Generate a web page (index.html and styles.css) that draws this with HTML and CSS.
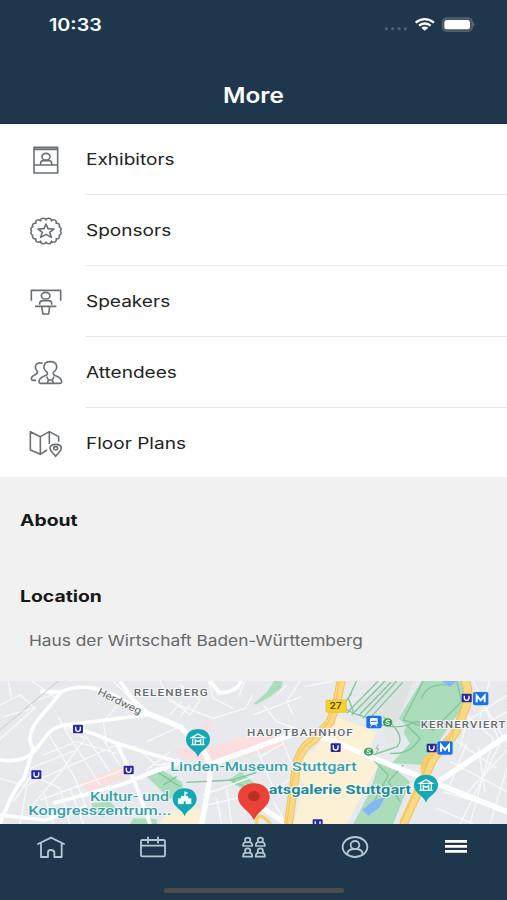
FILE: index.html
```html
<!DOCTYPE html>
<html lang="en">
<head>
<meta charset="utf-8">
<title>More</title>
<link rel="stylesheet" href="styles.css">
</head>
<body>
<div class="app">
  <header class="header">
    <div class="status">
      <span class="time">10:33</span>
      <svg class="status-icons" viewBox="1146 45 288 60">
        <g fill="#4d6070"><circle cx="1159" cy="86" r="5"/><circle cx="1178" cy="86" r="5"/><circle cx="1197" cy="86" r="5"/><circle cx="1216" cy="86" r="5"/></g>
        <g fill="none" stroke="#fff" stroke-width="7"><path d="M1247 68Q1274 47 1302 68"/><path d="M1257 77Q1274 64 1292 77"/></g>
        <path d="M1264 83Q1274 76 1285 83L1274 92Z" fill="#fff"/>
        <rect x="1327" y="54" width="90" height="40" rx="13" fill="#47545d" stroke="#54626c" stroke-width="4"/>
        <rect x="1333" y="60" width="77" height="28" rx="8" fill="#fff"/>
        <path d="M1420 68q5 5 0 11z" fill="#63727c" stroke="#63727c" stroke-width="2"/>
      </svg>
    </div>
    <h1 class="title">More</h1>
  </header>

  <nav class="menu">
    <a class="row">
      <svg class="icon" viewBox="84 43 108 90"><path d="M102 50H173V127H102ZM102 56H173M102 103H173M122 102V96Q123 90 130 90H146Q154 90 155 96V102"/><ellipse cx="138" cy="78" rx="12" ry="10"/></svg>
      <span class="row-body"><span class="label">Exhibitors</span></span>
    </a>
    <a class="row">
      <svg class="icon" viewBox="84 255 108 90"><path d="M181 300A8 8 0 0 1 177.700 313.400A8 8 0 0 1 168.400 324.700A8 8 0 0 1 154.500 332.300A8.500 8.500 0 0 1 138 335A8.500 8.500 0 0 1 121.500 332.300A8 8 0 0 1 107.600 324.700A8 8 0 0 1 98.300 313.400A8 8 0 0 1 95 300A8 8 0 0 1 98.300 286.600A8 8 0 0 1 107.600 275.300A8 8 0 0 1 121.500 267.700A8.500 8.500 0 0 1 138 265A8.500 8.500 0 0 1 154.500 267.700A8 8 0 0 1 168.400 275.300A8 8 0 0 1 177.700 286.600A8 8 0 0 1 181 300Z" transform="translate(0 18) scale(1 .94)"/><path d="M138 279L144 293L162 294L149 304L154 319L138 310L122 319L127 304L114 294L132 293Z"/></svg>
      <span class="row-body"><span class="label">Sponsors</span></span>
    </a>
    <a class="row">
      <svg class="icon" viewBox="84 467 108 90"><path d="M94 508V477H182V508M105 525H169M119 520V515Q120 508 130 508H145Q154 508 155 515V520M125 526L129 548H146L149 526"/><ellipse cx="137" cy="493" rx="13" ry="10"/></svg>
      <span class="row-body"><span class="label">Speakers</span></span>
    </a>
    <a class="row">
      <svg class="icon" viewBox="84 141 108 90"><path d="M142 190V184C127 174 128 152 151 152C174 152 175 174 160 184V190C163 197 185 194 185 213Q185 217 180 217H122Q117 217 117 213C117 194 139 197 142 190ZM140 197L145 207H157L162 197M145 207L142 217M157 207L160 217M128 157C106 151 101 169 112 181C116 194 94 190 94 203Q94 208 99 208H108"/></svg>
      <span class="row-body"><span class="label">Attendees</span></span>
    </a>
    <a class="row">
      <svg class="icon" viewBox="84 353 108 90"><path d="M141 416L121 429L91 416V361L121 376L148 361L176 376V391M121 376V429M148 361V398M167 435C159 424 150 419 150 411C150 403 157 399 167 399C177 399 184 403 184 411C184 419 175 424 167 435Z"/><ellipse cx="167" cy="411" rx="6" ry="5"/></svg>
      <span class="row-body"><span class="label">Floor Plans</span></span>
    </a>
  </nav>

  <main class="info">
    <h2 class="heading">About</h2>
    <h2 class="heading">Location</h2>
    <p class="address">Haus der Wirtschaft Baden-Württemberg</p>
  </main>

  <svg class="map" viewBox="0 18 1521 429" preserveAspectRatio="none">
    <defs>
      <g id="ubahn"><rect x="-15" y="-13" width="30" height="26" rx="3" fill="#28299a"/><path d="M-7 -7V0Q-7 7 0 7T7 0V-7" fill="none" stroke="#fff" stroke-width="4"/></g>
      <g id="metro"><rect x="-23" y="-20" width="46" height="40" rx="6" fill="#1a73e8"/><path d="M-12 11V-9L0 5L12 -9V11" fill="none" stroke="#fff" stroke-width="6"/></g>
      <g id="pin"><path d="M0 43C-6 22 -36 16 -36 -9C-36 -29 -20 -41 0 -41S36 -29 36 -9C36 16 6 22 0 43Z" fill="#12a8b5"/></g>
      <g id="museum" fill="none" stroke="#fff" stroke-width="4"><path d="M-19 -12L0 -23L19 -12ZM-16 -9V7M16 -9V7M-20 9H20M-8 7V-5Q0 3 8 -5V7"/></g>
      <g id="sbahn"><ellipse rx="14" ry="12" fill="#369b55"/><path d="M7 -5Q-6 -9 -5 -2Q7 1 5 5Q0 8 -7 4" fill="none" stroke="#fff" stroke-width="3"/></g>
    </defs>
    <rect y="18" width="1521" height="429" fill="#e7e9ec"/>

    <!-- built-up and commercial areas -->
    <g fill="#fbdedd">
      <path d="M240 322L365 275L395 298L265 350Z"/>
      <path d="M518 224L560 220L625 134L634 155L590 205L640 215L735 180L850 182L855 215L660 260L550 248Z"/>
    </g>
    <g fill="#fdf1d5">
      <path d="M1005 123L1128 172L1100 245L1137 265L1040 447H880L912 330L880 270L948 220Z"/>
      <path d="M500 410L600 400V447H480Z"/>
    </g>

    <!-- parks -->
    <g fill="#abdcbb">
      <path d="M441 305L480 282L545 320L550 345L510 372Z"/>
      <path d="M688 313L723 290L770 330L740 345L700 328Z"/>
      <path d="M759 88L800 52L822 18H848L844 39L810 65L770 88Z"/>
      <path d="M1265 18H1390L1400 80L1325 185L1285 270L1175 265L1230 205L1190 140Z"/>
      <path d="M1137 265L1195 290L1230 320L1180 447H1060L1110 350Z"/>
      <path d="M275 385L330 380L350 400L310 425L280 410ZM400 430L470 432V447H390Z"/>
    </g>
    <path d="M1194 130L1220 150L1200 200L1165 210L1150 170Z" fill="#e3e7e8"/>
    <path d="M1087 405L1120 377L1155 367L1140 395L1105 422ZM1325 18H1370L1350 36Z" fill="#85b5f5"/>
    <path d="M1150 18H1240L1190 145L1060 105Z" fill="#dce3e0"/>
    <g fill="none" stroke="#80c79c" stroke-width="4">
      <path d="M1135 18L1040 115M1155 18L1055 120M1173 22L1078 120M1190 18L1088 130M1208 22L1100 140M1055 55L1030 88Q1030 110 1110 130Q1160 170 1230 148Q1250 130 1270 150M1070 18L1045 70L1060 110M1150 125Q1220 180 1192 215L1118 240M1120 255L1165 300L1125 375M1210 270L1165 320L1200 380"/>
      <path d="M1270 18L1210 135L1300 165L1385 80L1370 18M1265 70Q1280 25 1340 30M1170 235Q1230 240 1260 190L1220 150M470 290L540 335M490 330L530 305M560 322L700 315L770 292M690 315L730 333"/>
    </g>

    <!-- minor streets -->
    <g fill="none" stroke="#f8f9fa" stroke-width="4">
      <path d="M0 90L60 60L105 100L0 192M25 18L35 70M95 18L165 68M10 125L100 100M115 75L180 50M175 125L190 155L255 190L175 300L90 400"/>
      <path d="M145 175L225 310L270 430M190 155L300 330M255 180L330 290M300 180L360 270M130 240L230 200L350 235M90 280L230 225M80 330L360 205M120 375L370 285M40 380L95 300L180 340L210 447M0 310L80 335L60 447M130 350L160 447M210 340L250 447M400 310L540 250"/>
      <path d="M370 70L310 140L320 205M430 110L340 18M510 70L570 120L600 75L540 30M480 18L510 80L640 130L735 100L759 60M570 90L540 125M625 18L640 70L700 100M650 60L720 40M510 120L545 80M735 18L715 65M440 200L550 150M440 285L510 230M400 210L470 270L500 265"/>
      <path d="M610 360L759 305M620 390L730 365L759 380M680 340L695 447M650 370L665 447M760 120L905 65M790 90L830 140L900 165M830 60L860 30M900 18L860 80L880 120M781 245L850 205L905 350M840 180L870 255M770 220L820 340M790 370L880 305M820 380L860 447M914 35L1000 18"/>
      <path d="M1420 18L1500 200M1450 85L1521 205M1521 60L1400 140L1380 220M1521 110L1425 165M1400 120L1480 190M1365 195L1490 280M1400 205L1350 330M1480 190L1410 447M1500 205L1380 447M1521 225L1395 360M1521 280L1470 447M1350 260L1521 350M1330 350L1460 390M1310 400L1420 447M1435 215L1455 350M1468 18L1440 130"/>
    </g>

    <!-- main streets -->
    <g fill="none" stroke="#fff" stroke-linejoin="round" stroke-width="11">
      <path d="M120 50L185 50Q225 30 285 40L350 65L450 118L540 155"/>
      <path d="M185 50L130 115Q70 180 100 220L72 310Q40 340 0 447M0 255Q80 265 110 220L145 175Q170 150 200 150L450 118"/>
      <path d="M200 150L285 178L350 205L480 245L550 265M350 205L400 310L450 447M160 385L360 330L540 262M0 420L135 435L260 395M630 18L655 50Q700 60 725 18"/>
      <path d="M360 18L400 75L450 118"/>
    </g>
    <path d="M450 118L540 155L610 225Q635 260 628 320L605 447" fill="none" stroke="#fff" stroke-width="16"/>
    <path d="M610 275L900 170L990 195L1270 310L1521 410M1300 330L1521 182M759 380L860 447" fill="none" stroke="#fff" stroke-width="16"/>
    <path d="M0 165L175 18" stroke="#c6c9cd" stroke-width="3"/>

    <!-- highways -->
    <g fill="none" stroke-linejoin="round">
      <g stroke="#f1c261" stroke-width="27"><path d="M1024 14L1011 80L990 142L940 195Q900 220 890 270L865 447M1395 14Q1410 50 1400 90L1365 175L1300 250L1270 315L1210 447"/></g>
      <g stroke="#fbd984" stroke-width="21"><path d="M1024 14L1011 80L990 142L940 195Q900 220 890 270L865 447M1395 14Q1410 50 1400 90L1365 175L1300 250L1270 315L1210 447"/></g>
      <path d="M1018 20L1006 82L985 142L935 197Q895 222 885 272L860 447M1388 90L1355 180L1290 252L1262 315L1200 447" stroke="#f3c75c" stroke-width="4"/>
      <path d="M1330 225Q1262 240 1268 290" stroke="#f6cd6e" stroke-width="12"/>
      <path d="M770 447Q770 400 812 447" stroke="#f7d163" stroke-width="10"/>
    </g>

    <g class="district">
      <text x="401" y="64" textLength="226" lengthAdjust="spacingAndGlyphs">RELENBERG</text>
      <text x="741" y="182" textLength="321" lengthAdjust="spacingAndGlyphs">HAUPTBAHNHOF</text>
      <text x="1262" y="158" textLength="258" lengthAdjust="spacingAndGlyphs">KERNERVIERT</text>
    </g>
    <text class="street" transform="translate(291 57) rotate(26)" textLength="142" lengthAdjust="spacingAndGlyphs">Herdweg</text>

    <use href="#ubahn" x="234" y="162"/><use href="#ubahn" x="109" y="299"/><use href="#ubahn" x="386" y="285"/>
    <use href="#ubahn" x="1007" y="218"/><use href="#ubahn" x="953" y="446"/><use href="#ubahn" x="1400" y="69"/><use href="#ubahn" x="1295" y="219"/>
    <use href="#metro" x="1442" y="71"/><use href="#metro" x="1335" y="219"/>
    <rect x="1099" y="122" width="46" height="38" rx="6" fill="#1a73e8"/>
    <rect x="1110" y="129" width="23" height="20" rx="4" fill="#fff"/><path d="M1113 139H1130" stroke="#1a73e8" stroke-width="3"/><path d="M1111 155L1117 149M1132 155L1126 149" stroke="#fff" stroke-width="3"/>
    <use href="#sbahn" x="1163" y="142"/><use href="#sbahn" x="1106" y="230"/>
    <path d="M1136 209L1127 220L1136 221L1128 234" fill="none" stroke="#80c79c" stroke-width="3"/>
    <rect x="978" y="75" width="61" height="37" rx="3" fill="#fad02c" stroke="#e6bf2c" stroke-width="2"/>
    <text class="road" x="989" y="102" textLength="36" lengthAdjust="spacingAndGlyphs">27</text>

    <use href="#pin" x="594" y="203"/><use href="#museum" x="594" y="200"/>
    <use href="#pin" x="554" y="381"/><path d="M535 386V371H544V364H564V371H573V386H558V378H550V386ZM554 364V350L563 354L556 358V364" fill="#fff" stroke="#fff" stroke-width="2"/>
    <use href="#pin" x="1278" y="340"/><use href="#museum" x="1278" y="337"/>

    <g class="place">
      <text x="511" y="289" textLength="559" lengthAdjust="spacingAndGlyphs">Linden-Museum Stuttgart</text>
      <text x="270" y="377" textLength="237" lengthAdjust="spacingAndGlyphs">Kultur- und</text>
      <text x="85" y="419" textLength="429" lengthAdjust="spacingAndGlyphs">Kongresszentrum...</text>
      <text class="strong" x="806" y="358" textLength="427" lengthAdjust="spacingAndGlyphs">atsgalerie Stuttgart</text>
    </g>
    <path d="M762 436C752 408 714 396 714 365C714 342 735 325 762 325S809 342 809 365C809 396 772 408 762 436Z" fill="#e94236"/>
    <ellipse cx="762" cy="364" rx="18" ry="15" fill="#b92f24"/>
  </svg>

  <footer class="footer">
    <nav class="tabs">
      <a class="tab"><svg class="tab-icon" viewBox="98 37 108 90"><path d="M113 73L152 54L191 73M122 71V112H143V98Q143 91 152 91T162 98V112H184V71"/></svg></a>
      <a class="tab"><svg class="tab-icon" viewBox="403 37 108 90"><rect x="424" y="61" width="72" height="49" rx="4"/><path d="M424 78H496M445 53V69M475 53V69"/></svg></a>
      <a class="tab"><svg class="tab-icon group" viewBox="708 37 108 90">
        <g id="member"><ellipse cx="743" cy="61" rx="8" ry="7"/><path d="M737 67Q729 69 729 79H757Q757 69 749 67"/></g>
        <use href="#member" x="38"/><use href="#member" y="32"/><use href="#member" x="38" y="32"/></svg></a>
      <a class="tab"><svg class="tab-icon" viewBox="252 37 108 90"><ellipse cx="306" cy="82" rx="37" ry="30"/><ellipse cx="306" cy="76" rx="13" ry="12"/><path d="M282 104Q285 89 300 88H312Q327 89 330 104"/></svg></a>
      <a class="tab"><svg class="tab-icon active" viewBox="556 37 108 90"><path d="M577 65H643M577 80H643M577 95H643"/></svg></a>
    </nav>
    <div class="home-bar"></div>
  </footer>
</div>
</body>
</html>
```
FILE: styles.css
```css
* { box-sizing: border-box; }
body {
  margin: 0;
  font-family: Inter, "Liberation Sans", sans-serif;
  background: #f1f1f1;
}
.app {
  width: 507px;
  height: 900px;
  display: flex;
  flex-direction: column;
  overflow: hidden;
}
.header {
  height: 124px;
  flex: none;
  background: #1e374c;
  border-bottom: 1px solid #172c40;
  color: #fff;
}
.status {
  display: flex;
  justify-content: space-between;
  align-items: center;
  height: 50px;
  padding: 0 29px 0 49px;
}
.time {
  font-size: 17px;
  font-weight: 600;
  transform: scaleX(1.16);
  transform-origin: left;
}
.status-icons { width: 96px; height: 20px; }
.title {
  margin: 32px 0 0;
  font-size: 21px;
  line-height: 28px;
  font-weight: 600;
  text-align: center;
  transform: scaleX(1.16);
}
.menu {
  flex: none;
  height: 353px;
  display: grid;
  grid-template-rows: repeat(5, 71px);
  overflow: hidden;
  background: #fff;
}
.row { display: flex; align-items: center; padding-left: 28px; }
.icon {
  width: 36px;
  height: 30px;
  margin-right: 22px;
  fill: none;
  stroke: #6b6f73;
  stroke-width: 4.8;
  stroke-linejoin: round;
}
.row-body {
  flex: 1;
  align-self: stretch;
  display: flex;
  align-items: center;
  border-bottom: 1px solid #e8e8e8;
}
.label {
  font-size: 16px;
  color: #222;
  transform: scaleX(1.19);
  transform-origin: left;
}
.info { flex: none; height: 204px; padding: 29px 20px 0; background: #f1f1f1; }
.heading {
  margin: 0 0 48px;
  font-size: 16px;
  line-height: 28px;
  font-weight: 700;
  color: #17181a;
  transform: scaleX(1.21);
  transform-origin: left;
}
.heading + .heading { margin-bottom: 18px; }
.address {
  margin: 0 0 0 9px;
  font-size: 15px;
  line-height: 26px;
  color: #66686a;
  white-space: nowrap;
  transform: scaleX(1.152);
  transform-origin: left;
}
.map { flex: none; width: 507px; height: 143px; display: block; }
.district {
  font: 500 29px Roboto, sans-serif;
  letter-spacing: 3px;
  fill: #666a6f;
  stroke: #f6f7f8;
  stroke-width: 6;
  paint-order: stroke;
}
.street { font: 30px Roboto, sans-serif; fill: #65696d; stroke: #f3f4f5; stroke-width: 5; paint-order: stroke; }
.road { font: 500 27px Roboto, sans-serif; fill: #4f4517; }
.place {
  font: 500 38px Roboto, sans-serif;
  fill: #38a0a8;
  stroke: #f6f9f9;
  stroke-width: 5;
  paint-order: stroke;
}
.strong { fill: #1f8b94; font-weight: 700; }
.footer {
  flex: 1;
  background: #1e374c;
  display: flex;
  flex-direction: column;
  justify-content: space-between;
  align-items: center;
}
.tabs { display: flex; width: 100%; height: 46px; }
.tab { flex: 1; display: flex; align-items: center; justify-content: center; }
.tab-icon {
  width: 36px;
  height: 30px;
  fill: none;
  stroke: #b5c6d4;
  stroke-width: 5.5;
  stroke-linejoin: round;
  stroke-linecap: round;
}
.group { stroke-width: 5; }
.active { stroke: #fff; stroke-width: 8; stroke-linecap: butt; }
.home-bar { width: 180px; height: 5px; margin-bottom: 7px; border-radius: 2px; background: #4b4c4c; }
```
